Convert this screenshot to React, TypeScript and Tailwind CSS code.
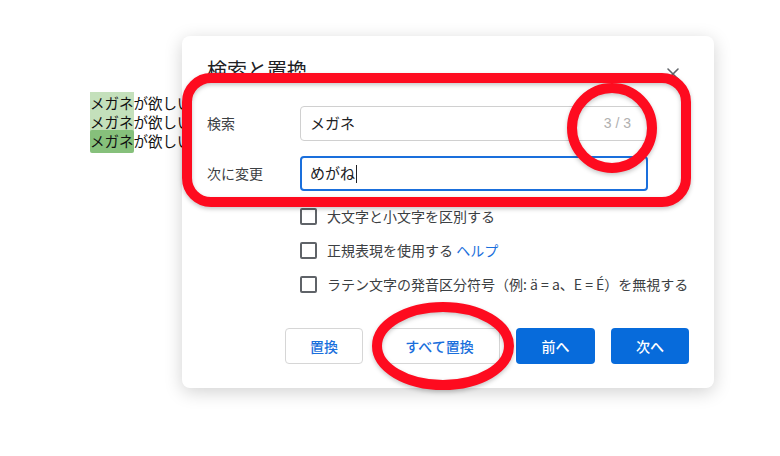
import React from "react";

const FONT = '"Noto Sans CJK JP", "Noto Sans", "Liberation Sans", sans-serif';

function Checkbox({ children }: { children: React.ReactNode }) {
  return (
    <div className="flex h-[20px] items-center gap-[10px]">
      <span className="h-[17px] w-[17px] shrink-0 rounded-[2px] border-2 border-[#5f6368] bg-white" />
      <span className="text-[14px] leading-[20px] text-[#3c4043]">{children}</span>
    </div>
  );
}

export default function App() {
  return (
    <div className="relative h-[456px] w-[780px] overflow-hidden bg-white" style={{ fontFamily: FONT }}>
      {/* background document text */}
      <div className="absolute left-[90px] top-[93px] flex flex-col text-[14.5px] leading-[19px] text-[#111]">
        <div>
          <span className="bg-[#c4e0bb]">メガネ</span>が欲しい
        </div>
        <div>
          <span className="bg-[#c4e0bb]">メガネ</span>が欲しい
        </div>
        <div>
          <span className="rounded-[2px] bg-[#86c07b] pb-[2px]">メガネ</span>が欲しい
        </div>
      </div>

      {/* dialog */}
      <div className="absolute left-[182px] top-[36px] flex w-[532px] flex-col rounded-[8px] bg-white px-[25px] pb-[24px] pt-[20px] shadow-[0_4px_18px_rgba(0,0,0,0.18)]">
        <div className="flex h-[28px] items-center justify-between">
          <div className="text-[20px] leading-[28px] text-[#202124]">検索と置換</div>
          <svg width="14" height="14" viewBox="0 0 14 14" className="mr-[9px] mt-[8px]">
            <path d="M2 2 L12 12 M12 2 L2 12" stroke="#5f6368" strokeWidth="1.6" strokeLinecap="round" />
          </svg>
        </div>

        <div className="mt-[22px] flex items-center">
          <div className="w-[93px] text-[14px] text-[#3c4043]">検索</div>
          <div className="flex h-[35px] w-[348px] items-center justify-between rounded-[4px] border border-[#d0d0d0] px-[9px]">
            <span className="text-[15px] text-[#202124]">メガネ</span>
            <span className="mr-[7px] text-[14px] text-[#b0b0b0]" style={{ fontFamily: '"Liberation Sans", sans-serif' }}>
              3 / 3
            </span>
          </div>
        </div>

        <div className="mt-[15px] flex items-center">
          <div className="w-[93px] text-[14px] text-[#3c4043]">次に変更</div>
          <div className="flex h-[35px] w-[348px] items-center rounded-[4px] border-2 border-[#1a6fdc] px-[8px]">
            <span className="text-[15px] text-[#202124]">めがね</span>
            <span className="ml-[1px] h-[18px] w-[1px] bg-[#202124]" />
          </div>
        </div>

        <div className="ml-[93px] mt-[15px] flex flex-col gap-[14px]">
          <Checkbox>大文字と小文字を区別する</Checkbox>
          <Checkbox>
            正規表現を使用する <span className="text-[#1a6fdc]">ヘルプ</span>
          </Checkbox>
          <Checkbox>ラテン文字の発音区分符号（例: ä = a、E = É）を無視する</Checkbox>
        </div>

        <div className="mt-[34px] flex justify-end gap-[16px]">
          <button className="h-[36px] w-[78px] rounded-[4px] border border-[#d6d6d6] bg-white text-[14px] font-medium text-[#1a6fdc]">
            置換
          </button>
          <button className="h-[36px] w-[121px] rounded-[4px] border border-[#d6d6d6] bg-white text-[14px] font-medium text-[#1a6fdc]">
            すべて置換
          </button>
          <button className="h-[36px] w-[79px] rounded-[4px] bg-[#076bdb] text-[14px] font-medium text-white">
            前へ
          </button>
          <button className="h-[36px] w-[78px] rounded-[4px] bg-[#076bdb] text-[14px] font-medium text-white">
            次へ
          </button>
        </div>
      </div>

      {/* red annotations */}
      <svg
        className="pointer-events-none absolute left-0 top-0"
        width="780"
        height="456"
        viewBox="0 0 780 456"
        style={{ filter: "drop-shadow(0 2px 2px rgba(0,0,0,0.22))" }}
      >
        <rect x="187" y="78" width="499" height="124" rx="24" fill="none" stroke="#fe0b1f" strokeWidth="10" />
        <circle cx="612" cy="128" r="40" fill="none" stroke="#fe0b1f" strokeWidth="10" />
        <ellipse cx="443" cy="346" rx="66" ry="39" fill="none" stroke="#fe0b1f" strokeWidth="10" />
      </svg>
    </div>
  );
}
